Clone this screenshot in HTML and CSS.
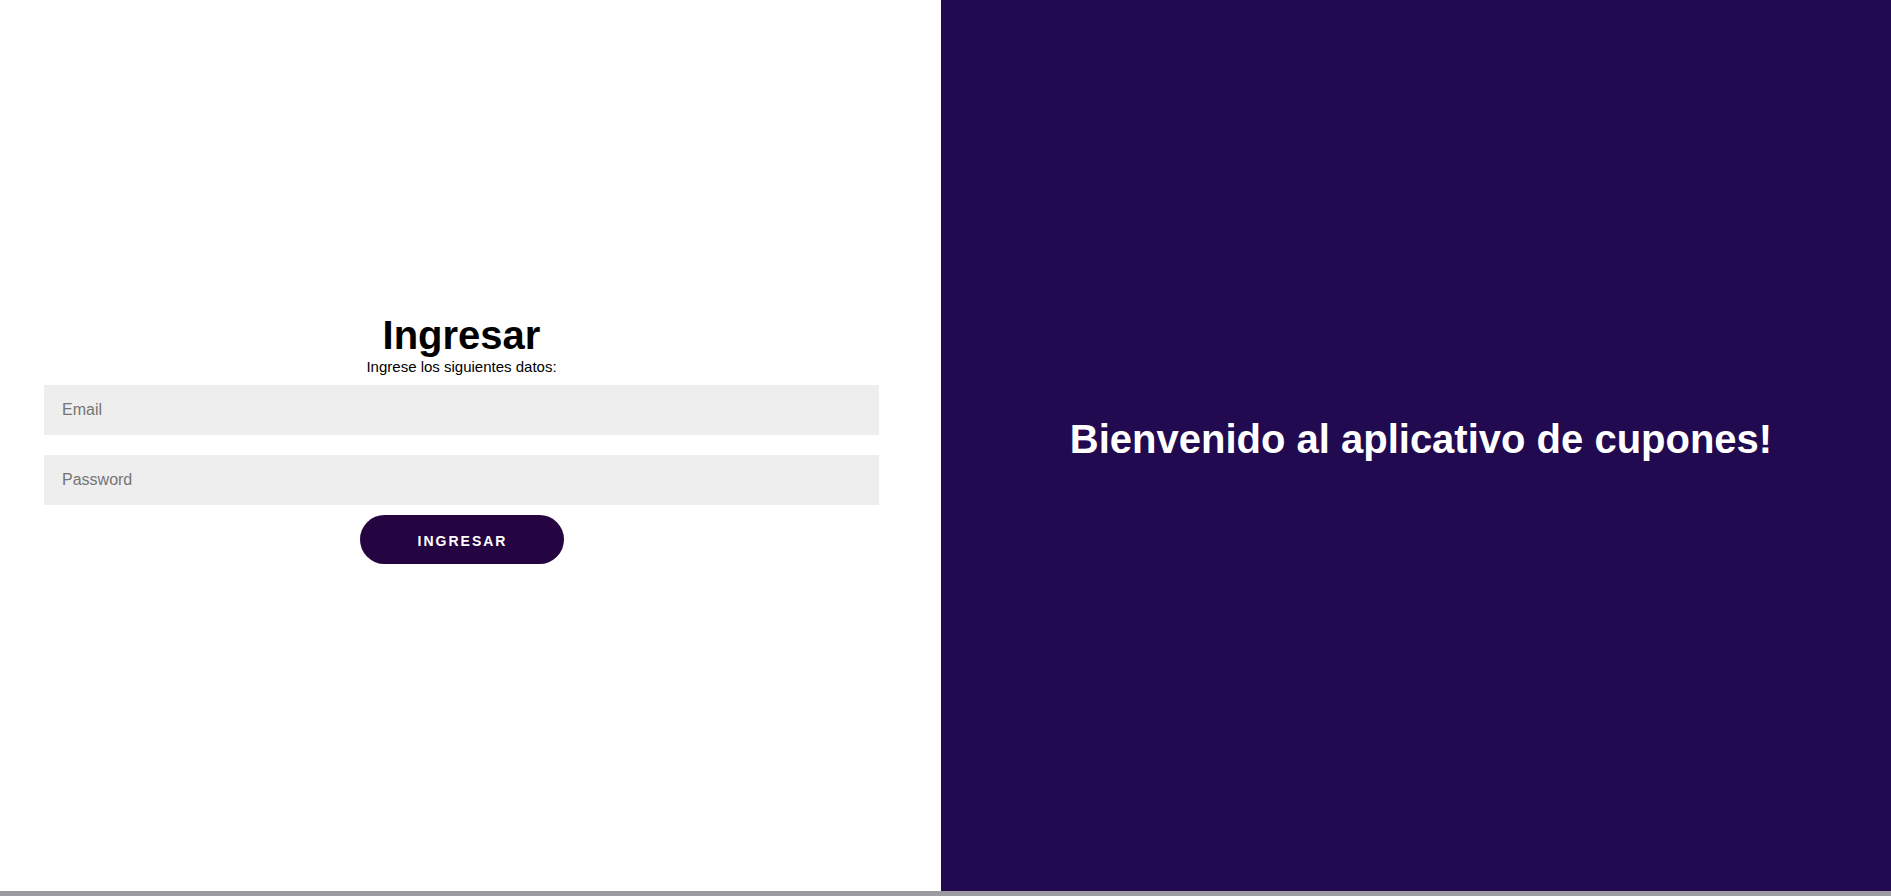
FILE: index.html
```html
<!DOCTYPE html>
<html lang="es">
<head>
<meta charset="utf-8">
<title>Ingresar</title>
<link rel="stylesheet" href="styles.css">
</head>
<body>
<div class="page">
  <div class="panels">
    <section class="login">
      <form class="login-form">
        <h1 class="login-title">Ingresar</h1>
        <span class="login-sub">Ingrese los siguientes datos:</span>
        <input class="field field-email" type="email" placeholder="Email">
        <input class="field field-pass" type="password" placeholder="Password">
        <button class="btn" type="button">Ingresar</button>
      </form>
    </section>
    <section class="welcome">
      <h1 class="welcome-title">Bienvenido al aplicativo de cupones!</h1>
    </section>
  </div>
  <div class="bottom-bar"></div>
</div>
</body>
</html>
```
FILE: styles.css
```css
* { box-sizing: border-box; }
html, body {
  margin: 0;
  padding: 0;
  height: 100%;
  overflow: hidden;
  font-family: "Liberation Sans", Arial, sans-serif;
}
.page {
  display: flex;
  flex-direction: column;
  width: 1891px;
  height: 896px;
}
.panels {
  display: flex;
  height: 891px;
}
.login {
  width: 941px;
  background: #ffffff;
  display: flex;
  flex-direction: column;
  justify-content: center;
  padding: 0 62px 0 44px;
}
.login-form {
  display: flex;
  flex-direction: column;
  align-items: center;
  margin: 0;
}
.login-title {
  margin: 0;
  font-size: 40px;
  line-height: 40px;
  font-weight: bold;
  color: #000;
}
.login-sub {
  display: block;
  margin-top: 3px;
  font-size: 15px;
  line-height: 17px;
  color: #000;
}
.field {
  display: block;
  width: 100%;
  height: 50px;
  border: none;
  outline: none;
  background: #eeeeee;
  padding: 0 18px;
  font-family: "Liberation Sans", Arial, sans-serif;
  font-size: 16px;
  color: #333;
}
.field::placeholder { color: #757575; }
.field-email { margin-top: 10px; }
.field-pass { margin-top: 20px; }
.btn {
  margin-top: 10px;
  margin-bottom: 13px;
  width: 204px;
  height: 49px;
  border: none;
  border-radius: 25px;
  background: #250541;
  color: #ffffff;
  font-family: "Liberation Sans", Arial, sans-serif;
  font-size: 14px;
  font-weight: bold;
  letter-spacing: 2px;
  text-transform: uppercase;
  padding: 3px 0 0 2px;
}
.welcome {
  flex: 1;
  background: #210a4f;
  display: flex;
  align-items: center;
  justify-content: center;
  padding-left: 10px;
  padding-bottom: 14px;
}
.welcome-title {
  margin: 0;
  color: #ffffff;
  font-size: 40px;
  font-weight: bold;
  line-height: 46px;
}
.bottom-bar {
  height: 5px;
  background: #9b9ba0;
}
```
